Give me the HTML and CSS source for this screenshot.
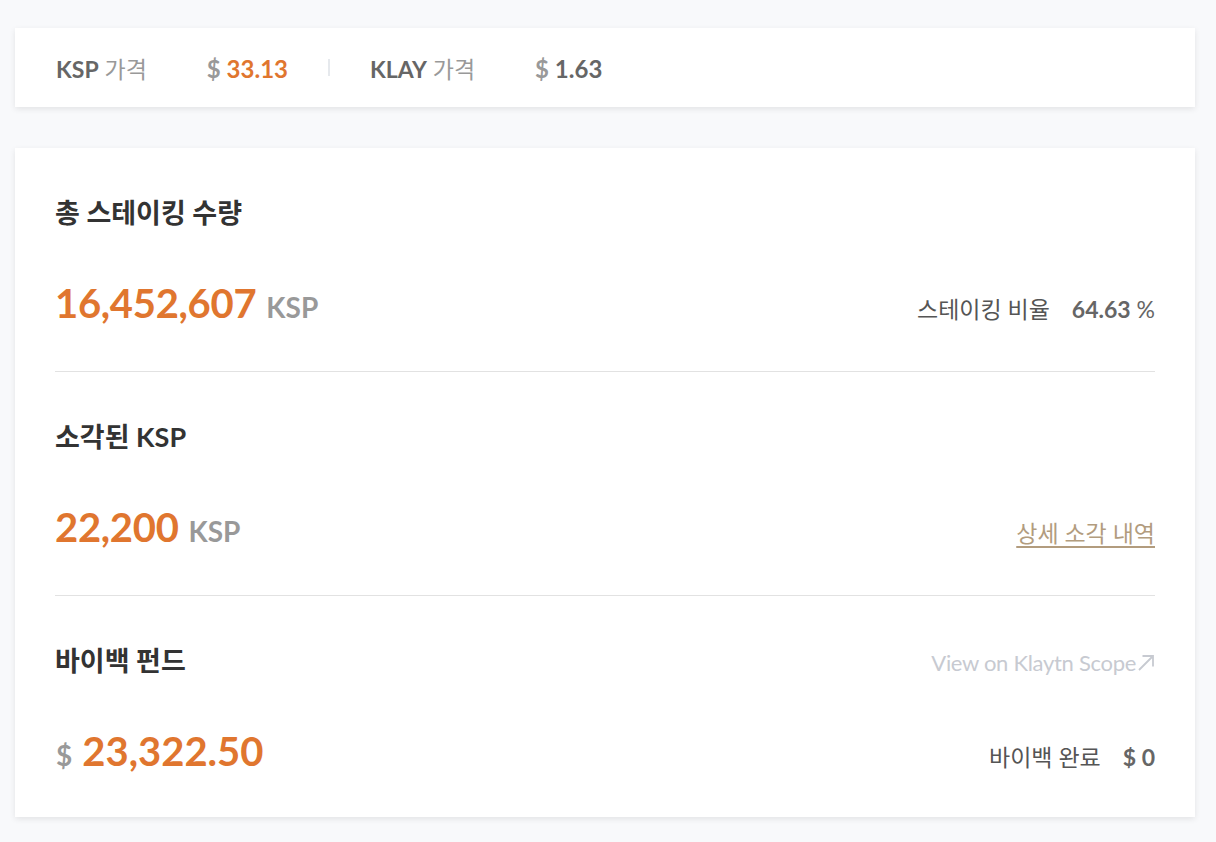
FILE: index.html
```html
<!DOCTYPE html>
<html lang="ko">
<head>
<meta charset="utf-8">
<title>KSP Staking</title>
<link rel="stylesheet" href="styles.css">
</head>
<body>
<div class="page">
  <div class="card price-bar">
    <div class="price-item">
      <span class="label"><b>KSP</b> 가격</span>
      <span class="price"><span class="cur">$</span> <span class="accent">33.13</span></span>
    </div>
    <span class="sep"></span>
    <div class="price-item">
      <span class="label"><b>KLAY</b> 가격</span>
      <span class="price"><span class="cur">$</span> <span class="dark">1.63</span></span>
    </div>
  </div>

  <div class="card stats">
    <section class="stat">
      <div class="stat-head">
        <h2 class="title">총 스테이킹 수량</h2>
      </div>
      <div class="stat-row">
        <div class="amount"><span class="num">16,452,607</span><span class="unit">KSP</span></div>
        <div class="side">스테이킹 비율<span class="side-val"><b>64.63</b> %</span></div>
      </div>
    </section>

    <section class="stat">
      <div class="stat-head">
        <h2 class="title">소각된 KSP</h2>
      </div>
      <div class="stat-row">
        <div class="amount"><span class="num">22,200</span><span class="unit">KSP</span></div>
        <a class="detail-link" href="#">상세 소각 내역</a>
      </div>
    </section>

    <section class="stat last">
      <div class="stat-head">
        <h2 class="title">바이백 펀드</h2>
        <a class="scope-link" href="#">View on Klaytn Scope<svg class="arrow" width="18" height="18" viewBox="0 0 18 18"><path d="M2 16 L16 2 M5.5 2 H16 V12.5" fill="none" stroke="currentColor" stroke-width="1.8"/></svg></a>
      </div>
      <div class="stat-row">
        <div class="amount"><span class="unit pre">$</span><span class="num wide">23,322.50</span></div>
        <div class="side">바이백 완료<span class="side-val"><b>$&nbsp;0</b></span></div>
      </div>
    </section>
  </div>
</div>
</body>
</html>
```

FILE: styles.css
```css
* { box-sizing: border-box; }
html, body { margin: 0; padding: 0; }
body {
  background: #f8f9fb;
  font-family: "Lato", "Noto Sans CJK KR", sans-serif;
  color: #333;
}
.page {
  width: 1180px;
  margin-left: 15px;
  padding-top: 28px;
  padding-bottom: 24px;
}
.card {
  background: #fff;
  box-shadow: 0 2px 6px rgba(0, 0, 0, 0.09);
}
.price-bar {
  height: 79px;
  display: flex;
  align-items: center;
  padding: 0 41px;
  font-size: 23px;
}
.price-item {
  display: flex;
  align-items: baseline;
  gap: 60px;
}
.label { color: #999; }
.label b { color: #666; font-weight: 700; }
.price { font-weight: 700; font-size: 24px; }
.cur { color: #999; }
.accent { color: #e0762f; }
.dark { color: #666; }
.sep {
  width: 2px;
  height: 17px;
  background: #e6e9ed;
  margin: 0 40px;
}
.stats {
  margin-top: 41px;
  padding: 0 40px;
}
.stat {
  padding: 48px 0 40px;
  border-bottom: 1px solid #e2e2e2;
}
.stat.last {
  border-bottom: none;
  padding-bottom: 38px;
}
.stat-head {
  display: flex;
  justify-content: space-between;
  align-items: baseline;
  height: 34px;
}
.title {
  margin: 0;
  font-size: 27px;
  line-height: 34px;
  font-weight: 700;
  color: #333;
}
.stat-row {
  margin-top: 45px;
  height: 56px;
  display: flex;
  justify-content: space-between;
  align-items: baseline;
}
.amount {
  display: flex;
  align-items: baseline;
  line-height: 56px;
}
.num {
  font-size: 40px;
  font-weight: 700;
  color: #e0762f;
  letter-spacing: -0.3px;
}
.num.wide { letter-spacing: 0; }
.unit {
  font-size: 28px;
  font-weight: 700;
  color: #999;
  margin-left: 10px;
}
.unit.pre {
  margin-left: 1px;
  margin-right: 10px;
}
.side {
  font-size: 23px;
  color: #555;
}
.side-val {
  margin-left: 22px;
  color: #666;
}
.side-val b { font-weight: 700; }
.detail-link {
  font-size: 23px;
  color: #b29c7e;
  text-decoration: underline;
  text-underline-offset: 4px;
}
.scope-link {
  font-size: 22px;
  color: #c7cad1;
  text-decoration: none;
  display: inline-flex;
  align-items: center;
  letter-spacing: -0.3px;
}
.arrow { margin-left: 1px; }
```
